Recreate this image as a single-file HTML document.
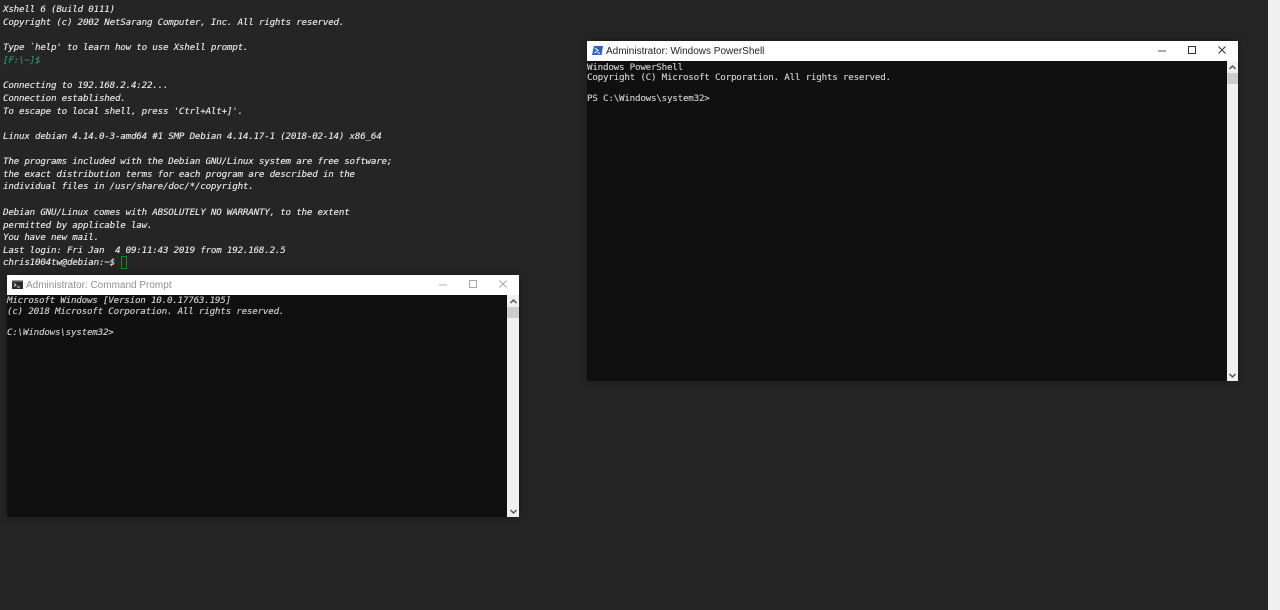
<!DOCTYPE html>
<html>
<head>
<meta charset="utf-8">
<style>
html,body{margin:0;padding:0;width:1280px;height:610px;overflow:hidden;background:#252525}
#root{position:relative;width:1280px;height:610px;background:#252525;overflow:hidden}
.strip{position:absolute;left:1268px;top:0;width:12px;height:610px;background:#f0f0f0}
.t{position:absolute;white-space:pre;font-family:"DejaVu Sans Mono",monospace;font-size:9.2px;letter-spacing:-.2px;line-height:12px;height:12px;color:#ececec;-webkit-text-stroke:.12px currentColor;filter:blur(.3px)}
.i{font-style:italic}
.win{position:absolute;background:#101010;box-shadow:0 0 8px rgba(0,0,0,.35)}
.bar{position:absolute;left:0;top:0;right:0;height:20px;background:#fff}
.title{position:absolute;top:1px;height:20px;line-height:20px;font-family:"Liberation Sans",sans-serif;font-size:10px;white-space:pre;filter:blur(.2px)}
.sb{position:absolute;right:0;top:20px;bottom:0;width:12px;background:#f0f0f0}
.thumb{position:absolute;left:0;top:12px;width:12px;height:11px;background:#cdcdcd}
svg{position:absolute;overflow:visible}
.c{color:#d4d4d4;line-height:11px;height:11px}
</style>
</head>
<body>
<div id="root">
<div class="strip"></div>

<div class="t i" style="left:3px;top:4px">Xshell 6 (Build 0111)</div>
<div class="t i" style="left:3px;top:17px">Copyright (c) 2002 NetSarang Computer, Inc. All rights reserved.</div>
<div class="t i" style="left:3px;top:42px">Type `help' to learn how to use Xshell prompt.</div>
<div class="t i" style="left:3px;top:55px;color:#2e9e68">[F:\~]$</div>
<div class="t i" style="left:3px;top:80px">Connecting to 192.168.2.4:22...</div>
<div class="t i" style="left:3px;top:93px">Connection established.</div>
<div class="t i" style="left:3px;top:106px">To escape to local shell, press 'Ctrl+Alt+]'.</div>
<div class="t i" style="left:3px;top:131px">Linux debian 4.14.0-3-amd64 #1 SMP Debian 4.14.17-1 (2018-02-14) x86_64</div>
<div class="t i" style="left:3px;top:156px">The programs included with the Debian GNU/Linux system are free software;</div>
<div class="t i" style="left:3px;top:169px">the exact distribution terms for each program are described in the</div>
<div class="t i" style="left:3px;top:181px">individual files in /usr/share/doc/*/copyright.</div>
<div class="t i" style="left:3px;top:207px">Debian GNU/Linux comes with ABSOLUTELY NO WARRANTY, to the extent</div>
<div class="t i" style="left:3px;top:220px">permitted by applicable law.</div>
<div class="t i" style="left:3px;top:232px">You have new mail.</div>
<div class="t i" style="left:3px;top:245px">Last login: Fri Jan  4 09:11:43 2019 from 192.168.2.5</div>
<div class="t i" style="left:3px;top:257px">chris1004tw@debian:~$</div>
<div style="position:absolute;left:121px;top:256px;width:4px;height:11px;border:1px solid #0f8a1e"></div>

<!-- CMD window -->
<div class="win" style="left:7px;top:275px;width:512px;height:242px">
  <div class="bar"></div>
  <svg style="left:5px;top:5px" width="11" height="9" viewBox="0 0 11 9">
    <rect x="0" y="0" width="11" height="9" fill="#2b2b2b"/>
    <rect x="0" y="0" width="11" height="1.5" fill="#9a9a9a"/>
    <path d="M2 3.5L4 5L2 6.5M5 7H8" stroke="#e0e0e0" stroke-width="1" fill="none"/>
  </svg>
  <div class="title" style="left:19px;color:#8f8f8f">Administrator: Command Prompt</div>
  <svg style="left:432px;top:6px" width="8" height="8"><path d="M0 4H8" stroke="#b0b0b0" stroke-width="1"/></svg>
  <svg style="left:462px;top:5px" width="8" height="8"><rect x=".5" y=".5" width="7" height="7" fill="none" stroke="#a8a8a8"/></svg>
  <svg style="left:492px;top:5px" width="8" height="8"><path d="M.5 .5L7.5 7.5M7.5 .5L.5 7.5" stroke="#a8a8a8" stroke-width="1"/></svg>
  <div class="sb">
    <div class="thumb"></div>
    <svg style="left:3px;top:4px" width="7" height="5"><path d="M.5 4L3.5 1L6.5 4" fill="none" stroke="#555" stroke-width="1.5"/></svg>
    <svg style="left:3px;top:214px" width="7" height="5"><path d="M.5 1L3.5 4L6.5 1" fill="none" stroke="#555" stroke-width="1.5"/></svg>
  </div>
</div>
<div class="t c i" style="left:7px;top:295px">Microsoft Windows [Version 10.0.17763.195]</div>
<div class="t c i" style="left:7px;top:306px">(c) 2018 Microsoft Corporation. All rights reserved.</div>
<div class="t c i" style="left:7px;top:327px">C:\Windows\system32&gt;</div>

<!-- PowerShell window -->
<div class="win" style="left:587px;top:41px;width:651px;height:340px">
  <div class="bar"></div>
  <svg style="left:5px;top:5px" width="11" height="9" viewBox="0 0 11 9">
    <path d="M2 0H11L9.5 9H0Z" fill="#2f62c0"/>
    <path d="M3 2L6 4.5L2.5 7M5.5 7H8" stroke="#fff" stroke-width="1" fill="none"/>
  </svg>
  <div class="title" style="left:19px;color:#222">Administrator: Windows PowerShell</div>
  <svg style="left:571px;top:6px" width="8" height="8"><path d="M0 4H8" stroke="#555" stroke-width="1"/></svg>
  <svg style="left:601px;top:5px" width="8" height="8"><rect x=".5" y=".5" width="7" height="7" fill="none" stroke="#333"/></svg>
  <svg style="left:631px;top:5px" width="8" height="8"><path d="M.5 .5L7.5 7.5M7.5 .5L.5 7.5" stroke="#333" stroke-width="1"/></svg>
  <div class="sb" style="width:11px">
    <div class="thumb" style="width:11px"></div>
    <svg style="left:2px;top:4px" width="7" height="5"><path d="M.5 4L3.5 1L6.5 4" fill="none" stroke="#555" stroke-width="1.5"/></svg>
    <svg style="left:2px;top:312px" width="7" height="5"><path d="M.5 1L3.5 4L6.5 1" fill="none" stroke="#555" stroke-width="1.5"/></svg>
  </div>
</div>
<div class="t c" style="left:587px;top:62px">Windows PowerShell</div>
<div class="t c" style="left:587px;top:72px">Copyright (C) Microsoft Corporation. All rights reserved.</div>
<div class="t c" style="left:587px;top:93px">PS C:\Windows\system32&gt;</div>
</div>
</body>
</html>
